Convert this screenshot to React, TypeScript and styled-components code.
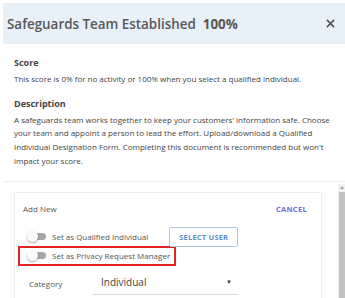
import styled, { createGlobalStyle } from 'styled-components';

const Global = createGlobalStyle`
  html, body {
    margin: 0;
    padding: 0;
    background: #ffffff;
  }
  body {
    font-family: "Open Sans", "Liberation Sans", sans-serif;
    color: #444;
  }
`;

const Modal = styled.div`
  width: 342px;
  height: 295px;
  padding: 3px 0 0 3px;
  overflow: hidden;
  display: flex;
  flex-direction: column;
`;

const Header = styled.div`
  height: 41px;
  flex: none;
  background: #e8f0f8;
  display: flex;
  align-items: center;
  justify-content: space-between;
  padding: 0 9px 0 4px;
`;

const Title = styled.h1`
  margin: 0;
  font-size: 13.4px;
  font-weight: 600;
  color: #585858;
  b {
    font-weight: 700;
    margin-left: 7px;
  }
`;

const Close = styled.button`
  border: 0;
  background: none;
  padding: 0;
  width: 12px;
  height: 12px;
  display: grid;
  place-items: center;
  cursor: pointer;
`;

const Body = styled.div`
  padding: 12px 11px 0 11px;
`;

const Section = styled.section`
  margin-bottom: 11px;
`;

const Heading = styled.h2`
  margin: 0 0 2px;
  font-size: 9px;
  font-weight: 700;
  color: #444;
  line-height: 14px;
`;

const Text = styled.p`
  margin: 0;
  font-size: 8px;
  line-height: 13.7px;
  color: #444;
`;

const Divider = styled.div`
  height: 0;
  border-top: 1px solid #eeeeee;
  margin-top: 2px;
  flex: none;
`;

const Lower = styled.div`
  flex: 1;
  display: flex;
  min-height: 0;
`;

const CardWrap = styled.div`
  flex: 1;
  padding: 10px 16px 0 11px;
`;

const Card = styled.div`
  border: 1px solid #eeeeee;
  border-bottom: 0;
  height: 100%;
  box-sizing: border-box;
  padding: 9px 14px 0 8px;
`;

const CardTop = styled.div`
  display: flex;
  justify-content: space-between;
  align-items: center;
  height: 14px;
`;

const Small = styled.span`
  font-size: 8px;
  color: #555;
`;

const LinkButton = styled.button`
  border: 0;
  background: none;
  padding: 0;
  font-family: inherit;
  font-size: 7.5px;
  font-weight: 700;
  color: #6a6fd0;
  letter-spacing: 0.3px;
`;

const Rows = styled.div`
  margin-top: 12px;
  padding-left: 4px;
`;

const Row = styled.div<{ $flagged?: boolean }>`
  display: flex;
  align-items: center;
  gap: 6px;
  width: fit-content;
  height: 18px;
  box-sizing: border-box;
  ${(p) =>
    p.$flagged
      ? `border: 2px solid #e02424; margin-left: -9px; padding: 0 4px 0 7px; height: 20px;`
      : ''}
`;

const Toggle = styled.span`
  position: relative;
  width: 19px;
  height: 11px;
  flex: none;
  &::before {
    content: '';
    position: absolute;
    left: 4px;
    top: 2px;
    width: 15px;
    height: 7px;
    border-radius: 4px;
    background: #a6a6a6;
  }
  &::after {
    content: '';
    position: absolute;
    left: 0;
    top: 0;
    width: 11px;
    height: 11px;
    border-radius: 50%;
    background: #fafafa;
    box-shadow: 0 1px 2px rgba(0, 0, 0, 0.35);
  }
`;

const Label = styled.span`
  font-size: 8px;
  color: #555;
`;

const Outline = styled.button`
  margin-left: 15px;
  height: 20px;
  padding: 0 9px;
  border: 1px solid #a9c8e6;
  border-radius: 2px;
  background: #fff;
  font-family: inherit;
  font-size: 7.5px;
  font-weight: 700;
  color: #5b8fc4;
  letter-spacing: 0.2px;
`;

const Field = styled.div`
  display: flex;
  align-items: flex-end;
  margin-top: 9px;
  padding-left: 6px;
`;

const FieldLabel = styled.span`
  width: 63px;
  font-size: 8px;
  color: #555;
  padding-bottom: 6px;
`;

const Select = styled.div`
  width: 146px;
  border-bottom: 1px solid #dddddd;
  display: flex;
  justify-content: space-between;
  align-items: center;
  padding: 0 6px 5px 9px;
  box-sizing: border-box;
  font-size: 10px;
  color: #444;
  span:last-child {
    font-size: 6px;
    color: #333;
  }
`;

const Scrollbar = styled.div`
  width: 7px;
  flex: none;
  margin-top: 2px;
  background: #f1f1f1;
  display: flex;
  flex-direction: column;
  align-items: center;
`;

const Arrow = styled.div`
  width: 0;
  height: 0;
  margin-top: 2px;
  border-left: 2px solid transparent;
  border-right: 2px solid transparent;
  border-bottom: 3px solid #a3a3a3;
`;

const Thumb = styled.div`
  margin-top: 3px;
  width: 6px;
  flex: 1;
  background: #c1c1c1;
`;

export default function App() {
  return (
    <>
      <Global />
      <Modal>
        <Header>
          <Title>
            Safeguards Team Established<b>100%</b>
          </Title>
          <Close aria-label="Close">
            <svg width="9" height="9" viewBox="0 0 10 10">
              <path d="M1 1L9 9M9 1L1 9" stroke="#555" strokeWidth="1.8" />
            </svg>
          </Close>
        </Header>
        <Body>
          <Section>
            <Heading>Score</Heading>
            <Text>This score is 0% for no activity or 100% when you select a qualified individual.</Text>
          </Section>
          <Section>
            <Heading>Description</Heading>
            <Text>
              A safeguards team works together to keep your customers' information safe. Choose
              your team and appoint a person to lead the effort. Upload/download a Qualified
              Individual Designation Form. Completing this document is recommended but won't
              impact your score.
            </Text>
          </Section>
        </Body>
        <Divider />
        <Lower>
          <CardWrap>
            <Card>
              <CardTop>
                <Small>Add New</Small>
                <LinkButton>CANCEL</LinkButton>
              </CardTop>
              <Rows>
                <Row>
                  <Toggle />
                  <Label>Set as Qualified Individual</Label>
                  <Outline>SELECT USER</Outline>
                </Row>
                <Row $flagged>
                  <Toggle />
                  <Label>Set as Privacy Request Manager</Label>
                </Row>
              </Rows>
              <Field>
                <FieldLabel>Category</FieldLabel>
                <Select>
                  <span>Individual</span>
                  <span>▼</span>
                </Select>
              </Field>
            </Card>
          </CardWrap>
          <Scrollbar>
            <Arrow />
            <Thumb />
          </Scrollbar>
        </Lower>
      </Modal>
    </>
  );
}
